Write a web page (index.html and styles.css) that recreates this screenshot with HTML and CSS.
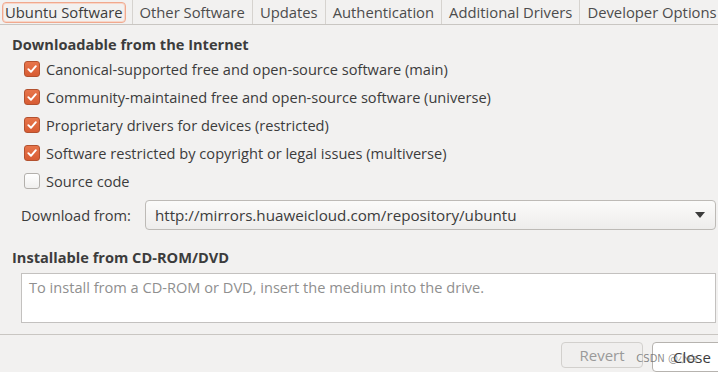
FILE: index.html
```html
<!DOCTYPE html>
<html lang="en">
<head>
    <meta charset="UTF-8" />
    <title>Software &amp; Updates</title>
    <link rel="stylesheet" href="styles.css">
</head>
<body>
    <div class="tabs">
        <div class="tab active"><span>Ubuntu Software</span></div>
        <div class="tab"><span>Other Software</span></div>
        <div class="tab"><span>Updates</span></div>
        <div class="tab"><span>Authentication</span></div>
        <div class="tab"><span>Additional Drivers</span></div>
        <div class="tab"><span>Developer Options</span></div>
    </div>
    <div class="page">
        <h3 class="section-title">Downloadable from the Internet</h3>
        <div class="checks">
            <label class="check"><span class="box checked"><svg viewBox="0 0 16 16"><path d="M3.8 8.2 L6.8 11.2 L12.4 4.8" /></svg></span>Canonical-supported free and open-source software (main)</label>
            <label class="check"><span class="box checked"><svg viewBox="0 0 16 16"><path d="M3.8 8.2 L6.8 11.2 L12.4 4.8" /></svg></span>Community-maintained free and open-source software (universe)</label>
            <label class="check"><span class="box checked"><svg viewBox="0 0 16 16"><path d="M3.8 8.2 L6.8 11.2 L12.4 4.8" /></svg></span>Proprietary drivers for devices (restricted)</label>
            <label class="check"><span class="box checked"><svg viewBox="0 0 16 16"><path d="M3.8 8.2 L6.8 11.2 L12.4 4.8" /></svg></span>Software restricted by copyright or legal issues (multiverse)</label>
            <label class="check"><span class="box"></span>Source code</label>
        </div>
        <div class="download-row">
            <span class="label">Download from:</span>
            <div class="combo">
                <span>http://mirrors.huaweicloud.com/repository/ubuntu</span>
                <svg class="caret" viewBox="0 0 10 6"><path d="M0 0 H10 L5 6 Z" /></svg>
            </div>
        </div>
        <h3 class="section-title cd">Installable from CD-ROM/DVD</h3>
        <div class="cd-box">To install from a CD-ROM or DVD, insert the medium into the drive.</div>
    </div>
    <div class="footer">
        <button class="btn" disabled>Revert</button>
        <button class="btn close">Close</button>
        <span class="watermark">CSDN @小白</span>
    </div>
</body>
</html>
```

FILE: styles.css
```css
html, body {
    margin: 0;
    padding: 0;
}
body {
    width: 718px;
    height: 372px;
    overflow: hidden;
    background: #f2f1f0;
    color: #3c3c3c;
    font-family: "Open Sans", "Noto Sans", sans-serif;
    font-size: 14.6px;
}
.tabs {
    display: flex;
    height: 24px;
    border-bottom: 1px solid #c9c6c2;
    white-space: nowrap;
}
.tab {
    display: flex;
    align-items: center;
    padding: 0 7px;
    border-right: 1px solid #d6d3cf;
    font-size: 14.8px;
    color: #4c4c4c;
}
.tab.active {
    padding: 0 6px 0 2px;
}
.tab.active span {
    padding: 0 2px;
    line-height: 19px;
    border: 1px solid #f1a98e;
    border-radius: 4px;
    box-shadow: inset 0 0 0 1px #f8d6c8;
    color: #3c3c3c;
}
.page {
    padding: 0 2px 0 12px;
}
.section-title {
    margin: 0;
    font-size: 14.6px;
    font-weight: bold;
    height: 29px;
    display: flex;
    align-items: flex-end;
}
.checks {
    display: flex;
    flex-direction: column;
    padding: 1px 0 0 12px;
}
.check {
    display: flex;
    align-items: center;
    gap: 6px;
    height: 28px;
    white-space: nowrap;
}
.box {
    width: 16px;
    height: 16px;
    box-sizing: border-box;
    border: 1px solid #b3b0ac;
    border-radius: 3px;
    background: linear-gradient(#ffffff, #f0efee);
}
.box.checked {
    border-color: #b3512f;
    background: linear-gradient(#e7754b, #d85c33);
}
.box svg {
    display: block;
    width: 14px;
    height: 14px;
}
.box svg path {
    fill: none;
    stroke: #ffffff;
    stroke-width: 2.2;
    stroke-linecap: round;
    stroke-linejoin: round;
}
.download-row {
    display: flex;
    align-items: center;
    gap: 14px;
    padding: 5px 0 0 9px;
}
.combo {
    flex: 1;
    height: 30px;
    box-sizing: border-box;
    display: flex;
    align-items: center;
    justify-content: space-between;
    padding: 0 10px 0 9px;
    border: 1px solid #bdbab6;
    border-radius: 4px;
    background: linear-gradient(#fbfbfa, #eeedec);
    color: #3c3c3c;
    font-size: 15.2px;
}
.caret {
    width: 10px;
    height: 6px;
}
.caret path {
    fill: #3c3c3c;
}
.section-title.cd {
    height: 37px;
}
.cd-box {
    margin: 6px 0 0 9px;
    height: 50px;
    box-sizing: border-box;
    border: 1px solid #c3c1bf;
    background: #ffffff;
    color: #8f8f8f;
    padding: 3px 7px;
}
.footer {
    position: relative;
    margin-top: 11px;
    border-top: 1px solid #c9c6c2;
    display: flex;
    justify-content: flex-end;
    gap: 9px;
    padding: 7px 0 0 0;
}
.btn {
    font-family: inherit;
    font-size: 15px;
    height: 26px;
    border: 1px solid #c0bebb;
    border-radius: 4px;
    background: linear-gradient(#fafaf9, #eeedec);
    color: #3c3c3c;
    padding: 0 12px;
}
.btn[disabled] {
    width: 82px;
    color: #9a9a9a;
    border-color: #d2d0cd;
    background: #f0efee;
}
.btn.close {
    width: 80px;
    height: 30px;
    margin-right: -14px;
    padding: 0 0 0 20px;
    text-align: left;
    background: #ffffff;
    border-color: #b6b3af;
}
.watermark {
    position: absolute;
    right: 20px;
    top: 17px;
    font-size: 10px;
    color: rgba(90, 90, 90, 0.7);
    font-family: "DejaVu Sans", sans-serif;
}
```
